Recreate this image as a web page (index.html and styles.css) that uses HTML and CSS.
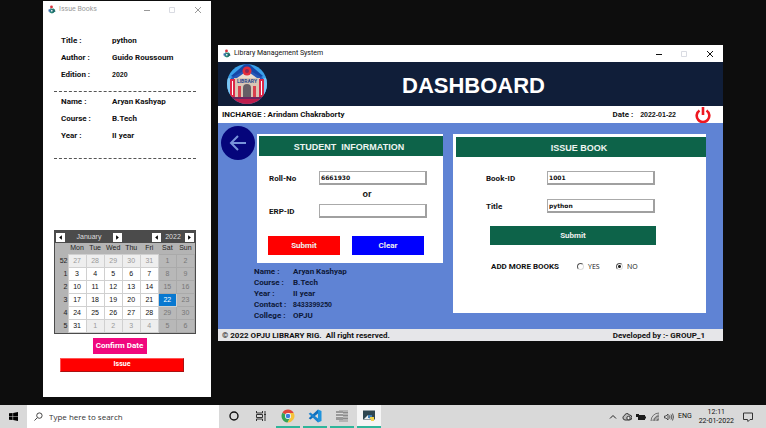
FILE: index.html
```html
<!DOCTYPE html>
<html lang="en">
<head>
<meta charset="utf-8">
<title>Library Management System</title>
<link rel="stylesheet" href="styles.css">
</head>
<body>
<svg class="defs" aria-hidden="true">
  <symbol id="app-icon" viewBox="0 0 16 16">
    <circle cx="7" cy="3" r="2.800" fill="#d8323c"/>
    <path d="M5 5l3 2 3-2 1 9-4 2-5-2z" fill="#2b8a78"/>
    <path d="M1 8l4-1v6l-4-1z" fill="#3b6fae"/>
    <path d="M8 8l5-1 2 5-6 3z" fill="#1d6a6a"/>
    <path d="M6 9h3v3H6z" fill="#e9eef0"/>
  </symbol>
  <symbol id="win-buttons" viewBox="0 0 64 10">
    <path d="M2 5.500h6" stroke="currentColor" fill="none"/>
    <path d="M27.500 2.500h5v5h-5z" stroke="#d9dbe2" fill="none"/>
    <path d="M53 2l6 6M59 2l-6 6" stroke="currentColor" fill="none"/>
  </symbol>
</svg>
<main class="desktop">
  <section class="window slip">
    <header class="titlebar inactive">
      <svg class="app-icon"><use href="#app-icon"/></svg>
      <span>Issue Books</span>
      <svg class="win-buttons"><use href="#win-buttons"/></svg>
    </header>
    <dl class="facts">
      <dt>Title :</dt><dd>python</dd>
      <dt>Author :</dt><dd>Guido Roussoum</dd>
      <dt>Edition :</dt><dd class="num">2020</dd>
    </dl>
    <hr class="dashes">
    <dl class="facts">
      <dt>Name :</dt><dd>Aryan Kashyap</dd>
      <dt>Course :</dt><dd>B.Tech</dd>
      <dt>Year :</dt><dd>II year</dd>
    </dl>
    <hr class="dashes second">
    <div class="calendar">
      <div class="cal-nav">
        <button aria-label="Previous month"><svg viewBox="0 0 10 10"><path d="M6.500 2.500v5L3.500 5z"/></svg></button>
        <span class="month">January</span>
        <button aria-label="Next month"><svg viewBox="0 0 10 10"><path d="M3.500 2.500v5l3-2.500z"/></svg></button>
        <button class="year-prev" aria-label="Previous year"><svg viewBox="0 0 10 10"><path d="M6.500 2.500v5L3.500 5z"/></svg></button>
        <span class="year">2022</span>
        <button aria-label="Next year"><svg viewBox="0 0 10 10"><path d="M3.500 2.500v5l3-2.500z"/></svg></button>
      </div>
      <table>
        <thead><tr><th></th><th>Mon</th><th>Tue</th><th>Wed</th><th>Thu</th><th>Fri</th><th>Sat</th><th>Sun</th></tr></thead>
        <tbody>
          <tr><th>52</th><td class="off">27</td><td class="off">28</td><td class="off">29</td><td class="off">30</td><td class="off">31</td><td class="end">1</td><td class="end">2</td></tr>
          <tr><th>1</th><td>3</td><td>4</td><td>5</td><td>6</td><td>7</td><td class="end">8</td><td class="end">9</td></tr>
          <tr><th>2</th><td>10</td><td>11</td><td>12</td><td>13</td><td>14</td><td class="end">15</td><td class="end">16</td></tr>
          <tr><th>3</th><td>17</td><td>18</td><td>19</td><td>20</td><td>21</td><td class="picked">22</td><td class="end">23</td></tr>
          <tr><th>4</th><td>24</td><td>25</td><td>26</td><td>27</td><td>28</td><td class="end">29</td><td class="end">30</td></tr>
          <tr><th>5</th><td>31</td><td class="off">1</td><td class="off">2</td><td class="off">3</td><td class="off">4</td><td class="end">5</td><td class="end">6</td></tr>
        </tbody>
      </table>
    </div>
    <button class="confirm">Confirm Date</button>
    <button class="issue">Issue</button>
  </section>

  <section class="window dashboard">
    <header class="titlebar">
      <svg class="app-icon"><use href="#app-icon"/></svg>
      <span>Library Management System</span>
      <svg class="win-buttons"><use href="#win-buttons"/></svg>
    </header>
    <div class="banner">
      <svg class="logo" viewBox="0 0 40 40" role="img" aria-label="Library">
        <clipPath id="disc"><circle cx="20" cy="20" r="20"/></clipPath>
        <g clip-path="url(#disc)">
          <path d="M0 0h40v40H0z" fill="#3aa0ea"/>
          <path d="M4 12L18 0h4l14 12-4 2H8z" fill="#1746a6"/>
          <path d="M0 13l4 2v16H0zM40 13l-4 2v16h4z" fill="#7cc6f4"/>
          <path d="M4 14L20 5l16 9v3H4z" fill="#2757b8"/>
          <path d="M7 14h26v20H7z" fill="#d9c5b5"/>
          <path d="M10 14l10-7 10 7z" fill="#e9dccf"/>
          <circle cx="20" cy="7" r="4.500" fill="#e32c3c"/>
          <circle cx="20" cy="7" r="2" fill="#8e2854"/>
          <path d="M3 15h5v18H3zM32 15h5v18h-5z" fill="#dd2747"/>
          <path d="M5 17h1v14H5zM34 17h1v14h-1z" fill="#fff"/>
          <path d="M11 22h3v11h-3zM26 22h3v11h-3z" fill="#d8404d"/>
          <path d="M16 33V24q0-4 4-4t4 4v9z" fill="#665e66"/>
          <path d="M0 33h40v7H0z" fill="#bd1e4d"/>
          <path d="M5 33h30v2H5z" fill="#6a2861"/>
          <text x="20" y="19" text-anchor="middle">LIBRARY</text>
        </g>
      </svg>
      <h1>DASHBOARD</h1>
    </div>
    <div class="infobar">
      <span>INCHARGE : Arindam Chakraborty</span>
      <span class="date">Date :</span>
      <span class="num">2022-01-22</span>
      <button class="power" aria-label="Log out">
        <svg viewBox="0 0 16 16"><path d="M4.500 3.500a6.300 6.300 0 1 0 7 0M8 0v8" fill="none" stroke="#ee1720" stroke-width="2.600"/></svg>
      </button>
    </div>
    <div class="content">
      <div class="left">
        <div class="student-row">
          <button class="back" aria-label="Back">
            <svg viewBox="0 0 34 34"><path d="M25 17H10M17 10l-7 7 7 7" fill="none" stroke="#7894da" stroke-width="2"/></svg>
          </button>
          <form class="panel student">
            <h2>STUDENT&nbsp; INFORMATION</h2>
            <div class="field"><label for="roll">Roll-No</label><input id="roll" value="6661930"></div>
            <p class="or">or</p>
            <div class="field"><label for="erp">ERP-ID</label><input id="erp"></div>
            <div class="actions"><button type="button" class="red">Submit</button><button type="button" class="blue">Clear</button></div>
          </form>
        </div>
        <dl class="details">
          <dt>Name :</dt><dd>Aryan Kashyap</dd>
          <dt>Course :</dt><dd>B.Tech</dd>
          <dt>Year :</dt><dd>II year</dd>
          <dt>Contact :</dt><dd class="num">8433399250</dd>
          <dt>College :</dt><dd>OPJU</dd>
        </dl>
      </div>
      <form class="panel book">
        <h2>ISSUE BOOK</h2>
        <div class="field"><label for="book">Book-ID</label><input id="book" value="1001"></div>
        <div class="field"><label for="title">Title</label><input id="title" value="python"></div>
        <button type="button" class="green">Submit</button>
        <div class="more">
          <span>ADD MORE BOOKS</span>
          <label><input type="radio" name="more">YES</label>
          <label><input type="radio" name="more" checked>NO</label>
        </div>
      </form>
    </div>
    <footer class="foot"><span>© 2022 OPJU LIBRARY RIG.&nbsp; All right reserved.</span><span>Developed by :- GROUP_1</span></footer>
  </section>
</main>

<nav class="taskbar">
  <button class="start" aria-label="Start"><svg viewBox="0 0 10 10"><path d="M0 1.500l4-.5v3.700H0zM4.600 1L10 0v4.700H4.600zM0 5.300h4V9l-4-.5zM4.600 5.300H10V10l-5.400-1z"/></svg></button>
  <div class="search">
    <svg viewBox="0 0 10 10"><path d="M3.500 6.500L.5 9.500M6 1a3 3 0 1 1 0 6 3 3 0 0 1 0-6z" fill="none" stroke="#333"/></svg>
    <input aria-label="Search" placeholder="Type here to search">
  </div>
  <button class="task" aria-label="Cortana"><svg viewBox="0 0 14 14"><circle cx="7" cy="7" r="4" fill="none" stroke="#111" stroke-width="1.400"/></svg></button>
  <button class="task" aria-label="Task view"><svg viewBox="0 0 14 14"><path d="M2.500 2v2h6V2M2.500 12v-2h6v2M2.500 5.500h6v3h-6zM11 2v10M10 5.500h2" fill="none" stroke="#333"/></svg></button>
  <button class="task open" aria-label="Chrome"><svg viewBox="0 0 14 14"><path d="M7 7L1.400 3.700A6.500 6.500 0 0 1 12.700 4H7z" fill="#e0463b"/><path d="M7 7L1.400 3.700A6.500 6.500 0 0 0 6.500 13.500L9.500 8.500z" fill="#36a356"/><path d="M7 4h5.700a6.500 6.500 0 0 1-6.200 9.500L9.800 8z" fill="#f5c33b"/><circle cx="7" cy="7" r="3" fill="#fff"/><circle cx="7" cy="7" r="2.300" fill="#3e7de0"/></svg></button>
  <button class="task open" aria-label="Code editor"><svg viewBox="0 0 14 14"><path d="M10 .5l3.500 1.500v10L10 13.500z" fill="#1f93dc"/><path d="M10 .5v4L2.500 10.500.7 9.200z" fill="#0f6fbc"/><path d="M10 13.500v-4L2.500 3.500.7 4.800z" fill="#1b83cf"/></svg></button>
  <button class="task open" aria-label="Database"><svg viewBox="0 0 14 14"><path d="M4 1h9v12H4z" fill="#b4b4b4"/><path d="M4 3.500h9M4 6.500h9M4 9.500h9" stroke="#8a8a8a"/><path d="M1 2h7v9H1z" fill="#999"/><path d="M1 4.500h7M1 7.500h7" stroke="#ddd"/></svg></button>
  <button class="task open active" aria-label="Python"><svg viewBox="0 0 14 14"><path d="M1 1.500h12v9H1z" fill="#2e4650"/><path d="M2 10l4-4 2 4z" fill="#e8eef0"/><path d="M6 6h4v3H6z" fill="#3e7fb4"/><path d="M8 8h4v4H9V10H8z" fill="#f1d34a"/></svg></button>
  <div class="tray">
    <svg viewBox="0 0 10 10"><path d="M2 6.500l3-3 3 3" fill="none" stroke="#222"/></svg>
    <svg viewBox="0 0 10 10"><path d="M3 8a2.300 2.300 0 0 1-.4-4.500A2.500 2.500 0 0 1 7.300 3 2.500 2.500 0 0 1 7.500 8z" fill="#bbb" stroke="#333"/><circle cx="6.500" cy="6" r="1.700" fill="#eee" stroke="#333"/></svg>
    <svg viewBox="0 0 10 10"><path d="M2 3h7v5H2zM9 4.500h1v2H9zM0 2h3v3H0z" fill="#1b1b1b"/></svg>
    <svg viewBox="0 0 10 10"><path d="M1 9L9 1v8z" fill="#aaa"/><path d="M1 9a8 8 0 0 1 8-8M4 9a5 5 0 0 1 5-5M7 9a2 2 0 0 1 2-2" fill="none" stroke="#555" stroke-width=".8"/></svg>
    <svg viewBox="0 0 10 10"><path d="M.5 4h1.500L4 2v6L2 6H.5zM5.500 3.500q1 1.500 0 3M7 2.500q1.700 2.500 0 5M8.500 1.500q2 3.500 0 7" fill="none" stroke="#333" stroke-width=".8"/></svg>
    <span>ENG</span>
    <time>12:11<br>22-01-2022</time>
    <svg class="notice" viewBox="0 0 10 10"><path d="M.5 1h9v6.500H7L5 9.500 4.500 7.500h-4z" fill="none" stroke="#333"/></svg>
  </div>
</nav>
</body>
</html>
```
FILE: styles.css
```css
* { box-sizing: border-box; }

body {
  margin: 0;
  min-height: 100vh;
  display: flex;
  flex-direction: column;
  background: #0d0d0d;
  color: #111;
  font: bold 8px/11px Roboto, Arial, sans-serif;
}

button, input { font: inherit; color: inherit; margin: 0; padding: 0; border: 0; }
h1, h2, p, dl, dd { margin: 0; }
.defs { position: absolute; width: 0; height: 0; }
.num { font: bold 7px/11px "Liberation Sans", Arial, sans-serif; }

/* Windows on the desktop */
.desktop { position: relative; flex: 1; }
.window { position: absolute; background: #fff; }
.slip {
  left: 43px;
  top: 1px;
  width: 168px;
  padding-bottom: 25px;
  display: flex;
  flex-direction: column;
}
.dashboard { left: 218px; right: 43px; top: 45px; }

.titlebar {
  display: flex;
  align-items: center;
  height: 17px;
  padding: 0 5px;
  gap: 3px;
  font: 7px/11px Roboto, sans-serif;
}
.titlebar.inactive { color: #999; }
.app-icon { width: 8px; height: 9px; }
.win-buttons { width: 64px; height: 10px; margin-left: auto; }

/* Issue slip */
.facts {
  display: grid;
  grid-template-columns: 51px 1fr;
  row-gap: 6px;
  padding: 17px 18px 10px;
}
.dashes { width: 142px; margin: 1px 11px 0; border: 0; border-top: 1px dashed #555; }
.dashes + .facts { padding-top: 4px; padding-bottom: 16px; }
.second { margin-bottom: 71px; }

.calendar {
  width: 142px;
  margin-left: 11px;
  background: #4b4b4b;
  border: 1px solid #4b4b4b;
  font: 7px/10px "Liberation Sans", Arial, sans-serif;
}
.cal-nav { display: flex; align-items: center; height: 12px; padding: 0 1px; color: #ddd; }
.cal-nav button { width: 9px; height: 9px; background: #fff; display: flex; }
.month { width: 48px; text-align: center; }
.cal-nav .year-prev { margin-left: auto; }
.year { width: 24px; text-align: center; }
.calendar table { width: 100%; table-layout: fixed; border-collapse: collapse; background: #b4b4b4; }
.calendar tbody tr { height: 13px; }
.calendar thead tr { height: 11px; }
.calendar th, .calendar td { padding: 0; text-align: center; font-weight: normal; }
.calendar th { color: #222; }
.calendar th:first-child { width: 13px; text-align: right; }
.calendar td { background: #fff; border: 1px solid #d0d0d0; }
.calendar .off { background: #eee; color: #999; }
.calendar .end { background: #b8b8b8; border-color: #aaa; color: #777; }
.calendar .picked { background: #0878d0; color: #fff; }

.confirm { align-self: center; width: 54px; height: 16px; margin: 4px 15px 0 0; background: #f0087e; color: #fff; }
.issue {
  height: 14px;
  margin: 4px 27px 0 17px;
  background: #f00;
  color: #fff;
  border: 1px solid #a11;
  border-top-color: #f55;
  border-left-color: #f55;
  font-size: 7px;
}

/* Dashboard */
.banner {
  display: grid;
  grid-template-columns: 40px 1fr 40px;
  align-items: center;
  height: 44px;
  padding: 0 9px;
  background: #101e39;
  color: #fff;
}
.banner h1 { text-align: center; font: bold 22px/28px "Liberation Sans", Arial, sans-serif; padding: 3px 0 0 6px; }
.logo { width: 40px; height: 40px; }
.logo text { font-size: 5px; fill: #2b4a8e; }

.infobar { display: flex; align-items: center; height: 17px; padding: 0 12px 0 4px; }
.date { margin-left: auto; margin-right: 7px; }
.power { width: 16px; height: 16px; margin-left: 19px; background: none; }
.power svg { display: block; }

.content {
  display: grid;
  grid-template-columns: 222fr 253fr;
  gap: 10px;
  align-items: start;
  min-height: 206px;
  padding: 3px 17px 0 3px;
  background: #5f83d4;
}
.student-row { display: flex; align-items: flex-start; gap: 2px; }
.back { width: 34px; height: 34px; border-radius: 50%; background: #05057b; }
.back svg { display: block; }

.panel { background: #fff; margin-top: 8px; padding: 2px 0 0 2px; }
.panel h2 {
  background: #0d6349;
  color: #eef5f2;
  height: 20px;
  padding-right: 4px;
  text-align: center;
  font: bold 9px/22px "Liberation Sans", Arial, sans-serif;
}
.student { flex: 1; padding-bottom: 8px; }
.field { display: grid; grid-template-columns: 50px 108px; align-items: center; height: 14px; }
.field input {
  height: 14px;
  padding: 0 1px;
  background: #fff;
  border: 1px solid #aaa;
  border-right: 2px solid #a0a0a0;
  border-bottom: 2px solid #a0a0a0;
  font: bold 6px/10px "DejaVu Sans", sans-serif;
}
.student .field { margin-left: 10px; }
.student h2 + .field { margin-top: 15px; }
.or { text-align: center; font: bold 9px/19px "Liberation Sans", Arial, sans-serif; padding-left: 32px; }
.actions { display: flex; gap: 12px; padding: 18px 19px 0 9px; }
.actions button { flex: 1; height: 19px; color: #eee; }
.actions .red { background: #f00; }
.actions .blue { background: #00f; }

.details { display: grid; grid-template-columns: 39px 1fr; padding: 3px 0 0 33px; color: #0d1838; }

.book { padding: 3px 0 41px 3px; }
.book .field { grid-template-columns: 61px 108px; margin: 14px 0 0 30px; }
.green { display: block; width: 166px; height: 19px; margin: 13px 0 0 34px; background: #0d6349; color: #eee; }
.more { display: flex; align-items: center; margin: 16px 0 0 35px; }
.more span { width: 86px; }
.more label { display: flex; align-items: center; gap: 4px; width: 39px; font: 7px/11px "Open Sans", sans-serif; }
.more input {
  appearance: none;
  width: 7px;
  height: 7px;
  border: 1px solid #555;
  border-right-color: #ddd;
  border-bottom-color: #ddd;
  border-radius: 50%;
}
.more input:checked { background: radial-gradient(#222 0 1px, #fff 2px); }

.foot { display: flex; justify-content: space-between; height: 12px; padding: 1px 18px 0 4px; background: #e6e6e9; }

/* Taskbar */
.taskbar { display: flex; height: 23px; background: #d9d9d9; font: 7px/9px Roboto, sans-serif; }
.taskbar button { background: none; display: flex; align-items: center; justify-content: center; }
.start { width: 27px; }
.start svg { width: 9px; height: 9px; }
.search { display: flex; align-items: center; gap: 6px; width: 192px; padding-left: 7px; background: #fff; }
.search svg { width: 9px; height: 9px; }
.search input { flex: 1; min-width: 0; height: 14px; font: 8px/14px "Open Sans", sans-serif; background: none; }
.search input::placeholder { color: #333; }
.taskbar .task { width: 24px; margin-left: 3px; border-bottom: 2px solid transparent; }
.task svg { width: 14px; height: 14px; }
.taskbar .open { border-color: #2fb59a; }
.taskbar .active { background: #f5f5f5; }
.tray { display: flex; align-items: center; gap: 4px; margin-left: auto; padding-right: 13px; }
.tray svg { width: 10px; height: 10px; }
.tray time { text-align: center; margin: 0 5px 0 3px; }
```
